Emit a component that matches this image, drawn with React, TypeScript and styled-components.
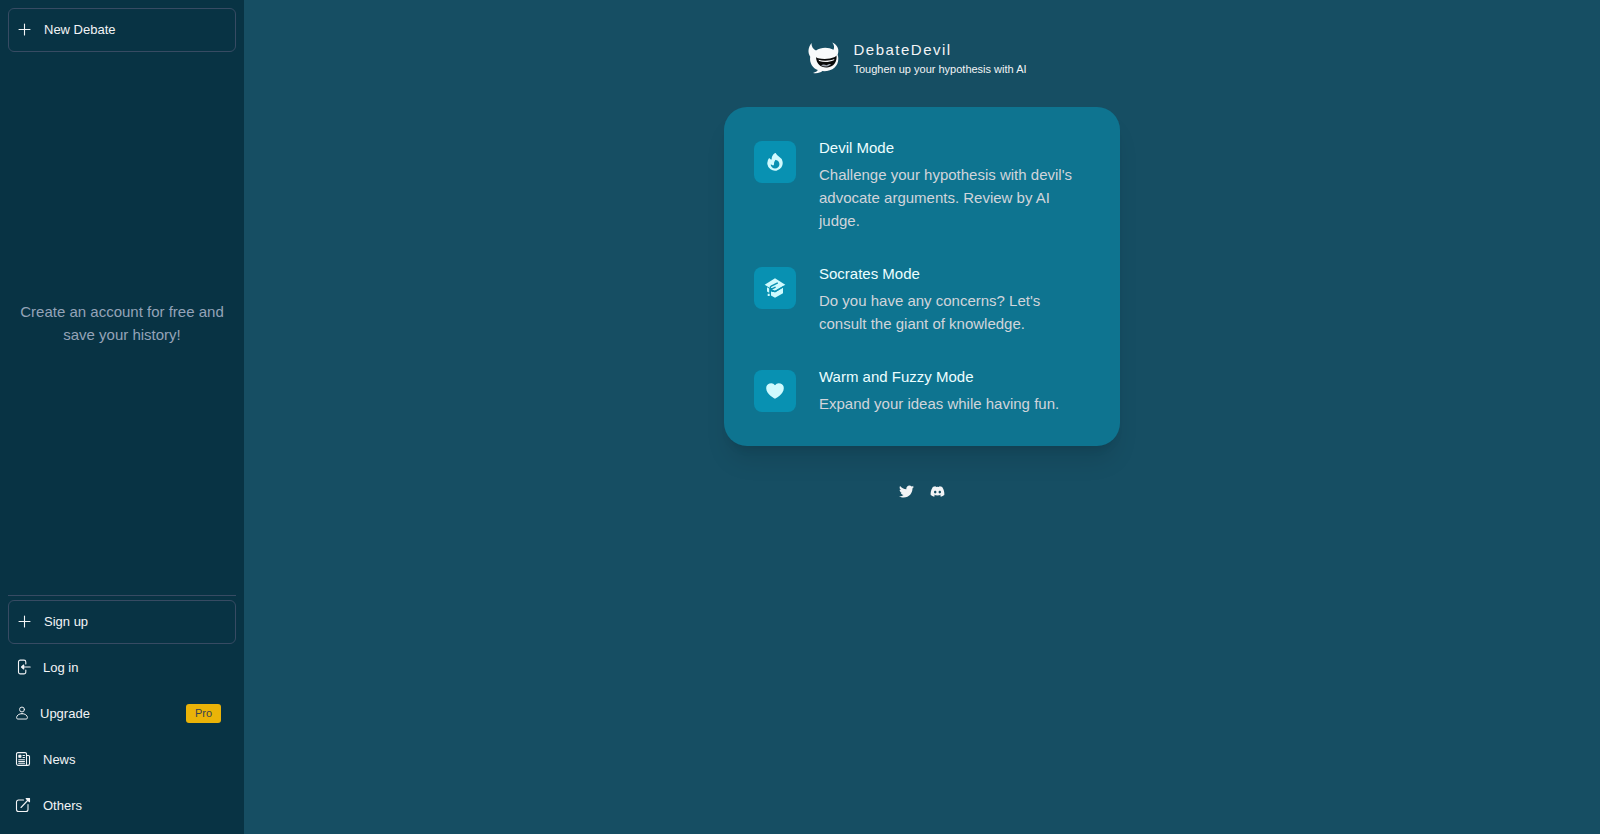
import React from "react";
import styled, { createGlobalStyle } from "styled-components";
import { HiMiniFire, HiMiniHeart } from "react-icons/hi2";
import { FaTwitter, FaDiscord } from "react-icons/fa";

const GlobalStyle = createGlobalStyle`
  *, *::before, *::after { box-sizing: border-box; }
  body {
    margin: 0;
    background: #164e63;
    color: #f3f4f6;
    font-family: "Liberation Sans", Arial, sans-serif;
    font-size: 15px;
    line-height: 23px;
  }
  h1, h2, p, ul { margin: 0; padding: 0; font-weight: 400; }
  ul { list-style: none; }
  svg { display: block; flex: none; }
`;

const Shell = styled.div`
  display: flex;
  min-height: 100vh;
`;

const Sidebar = styled.aside`
  display: flex;
  flex-direction: column;
  flex: none;
  width: 244px;
  padding: 8px 8px 6px;
  background: #083344;
`;

const OutlinedButton = styled.button`
  display: flex;
  align-items: center;
  gap: 12px;
  width: 100%;
  height: 44px;
  padding: 0 7px 2px;
  border: 1px solid #374b63;
  border-radius: 6px;
  background: transparent;
  color: inherit;
  font: inherit;
  font-size: 13px;
  text-align: left;
  cursor: pointer;
`;

const History = styled.div`
  display: flex;
  flex: 1;
  align-items: center;
  justify-content: center;
  border-bottom: 1px solid #374b63;
  margin-bottom: 4px;
  padding: 0 8px 2px;
  color: #94a3b8;
  text-align: center;
`;

const MenuLink = styled.a<{ $tight?: boolean }>`
  display: flex;
  align-items: center;
  gap: ${(p) => (p.$tight ? 11 : 12)}px;
  height: 46px;
  padding: 0 15px 0 7px;
  color: inherit;
  font-size: 13px;
  text-decoration: none;
`;

const ProBadge = styled.span`
  margin-left: auto;
  padding: 0 9px;
  border-radius: 3px;
  background: #eab308;
  color: #374151;
  font-size: 11px;
  line-height: 19px;
`;

const Main = styled.main`
  display: flex;
  flex: 1;
  flex-direction: column;
  align-items: center;
  padding: 38px 16px;
`;

const Brand = styled.header`
  display: flex;
  align-items: center;
  gap: 10px;
  padding-right: 12px;
`;

const BrandName = styled.h1`
  font-size: 15px;
  line-height: 23px;
  letter-spacing: 0.1em;
`;

const Tagline = styled.p`
  font-size: 11px;
  line-height: 16px;
`;

const Card = styled.ul`
  display: flex;
  flex-direction: column;
  gap: 30px;
  width: 100%;
  max-width: 396px;
  margin-top: 30px;
  padding: 29px 30px 31px;
  border-radius: 23px;
  background: #0e7490;
  box-shadow: 0 19px 24px -5px rgba(0, 0, 0, 0.1), 0 8px 10px -6px rgba(0, 0, 0, 0.1);
`;

const Mode = styled.li`
  display: flex;
  align-items: flex-start;
  gap: 23px;
`;

const ModeIcon = styled.span`
  display: grid;
  flex: none;
  place-items: center;
  width: 42px;
  height: 42px;
  margin-top: 5px;
  border-radius: 8px;
  background: #0891b2;
  color: #cffafe;
`;

const ModeTitle = styled.h2`
  color: #ecfeff;
  font-size: 15px;
  line-height: 23px;
`;

const ModeText = styled.p`
  margin-top: 4px;
  color: #d1d5db;
`;

const Socials = styled.div`
  display: flex;
  gap: 16px;
  margin-top: 38px;
`;

const SocialLink = styled.a`
  color: #f3f4f6;
`;

const Line = ({ size = 16, children }: { size?: number; children: React.ReactNode }) => (
  <svg width={size} height={size} viewBox="0 0 16 16" fill="none" stroke="currentColor" strokeWidth="1.1" strokeLinecap="round" strokeLinejoin="round" aria-hidden="true">
    {children}
  </svg>
);

const PlusIcon = () => (
  <Line>
    <path d="M8.500 3v11M3 8.500h11" />
  </Line>
);

const LoginIcon = () => (
  <Line>
    <path d="M10.800 5V2.900A1.800 1.800 0 0 0 9 1.100H5.300a1.800 1.800 0 0 0-1.800 1.800v10.200a1.800 1.800 0 0 0 1.800 1.800H9a1.800 1.800 0 0 0 1.800-1.800V11M15.200 8H7.500" />
    <path d="M8.700 6v4L6.500 8z" fill="currentColor" />
  </Line>
);

const UserIcon = () => (
  <Line size={14}>
    <circle cx="8" cy="4" r="2.800" />
    <path d="M8 8.700c-3.500 0-6.200 2-6.200 4.700 0 .9.500 1.500 1.400 1.500h9.600c.9 0 1.400-.6 1.400-1.500 0-2.700-2.700-4.700-6.200-4.700z" />
  </Line>
);

const NewsIcon = () => (
  <Line>
    <path d="M11.500 13V3a1.400 1.400 0 0 0-1.400-1.400H2.900A1.400 1.400 0 0 0 1.500 3v9.600a1.800 1.800 0 0 0 1.800 1.800h9.500a1.700 1.700 0 0 0 1.700-1.700V5.500a1 1 0 0 0-1-1h-2M11.500 12.900c0 .8.500 1.500 1.400 1.500" />
    <path d="M8 4.500h1.500M8 6.500h1.500M3.700 8.700h5.800M3.700 10.500h5.800M3.700 12.200h5.800" />
    <path d="M3.900 4.300h2v2h-2z" fill="currentColor" />
  </Line>
);

const ExternalIcon = () => (
  <Line>
    <path d="M8.500 3h-5a2 2 0 0 0-2 2v7.500a2 2 0 0 0 2 2H11a2 2 0 0 0 2-2v-5M13.500 2.500L6 10.500" />
    <path d="M11.200 1.500h3.300v3.300z" fill="currentColor" />
  </Line>
);

const CapIcon = () => (
  <svg width="22" height="22" viewBox="0 0 22 22" aria-hidden="true">
    <path fill="currentColor" d="M11 1.300L21.300 7.800 11 14 .7 7.800z" />
    <path fill="currentColor" d="M11 20.700L7 18.400v-4.600l4 1.800 8-5v5.700z" />
    <path fill="currentColor" d="M3 10.300l2.200 1.200v4.200L3 14.500zM3.700 16.700h2v2.300h-2z" />
    <path fill="none" stroke="#0891b2" strokeWidth="1.400" d="M13.800 5.900L7.200 9.200c-1.700 1-.8 3.200 1.200 2.400l3.200-1.500M20 9.300l-8 4.600c-2 1.100-4 .2-5.300-.6" />
  </svg>
);

const DevilLogo = () => (
  <svg width="38" height="38" viewBox="0 0 38 38" aria-hidden="true">
    <path fill="#f9fafb" d="M6.500 4C3 8.500 2.600 13.500 5.200 17.700 4.200 24 8 29.500 12.800 31.100c-.8 1.500-2 2.200-4.800 2.900 4 .8 7.200-.1 9.400-1.900C27 32.700 33.500 27.500 33.300 19.500c0-1.400-.3-2.600-.7-3.700 2-5 .2-9.800-5.300-12.300 2 2.700 2.200 5 1.200 7.300-5-3-12.500-3-17.500.7C8 10 6.300 7.300 6.500 4z" />
    <path fill="#0a0a0a" d="M11 18c.6.800 1.200 1 2 1.200 6 1.200 12 .8 16.800-1.200.8-.4 1.200-.8 1.700-1.500.8 6.500-3 11.500-9.300 12-6 .5-11-3.500-11.200-10.500z" />
    <path fill="#f3f4f6" d="M13.500 20.800c5.500 1.400 11.300 1 16-.8l-.6 1.200c-4.300 2-10.200 2.300-14.800.8z" />
    <path fill="#9ca3af" d="M16 26.300c2-1.500 4-.8 5.500-.1 1.500-1 3-1.300 4.700-1.200-2.500 2.900-7 3.300-10.200 1.300z" />
  </svg>
);

const modes = [
  { title: "Devil Mode", text: "Challenge your hypothesis with devil's advocate arguments. Review by AI judge.", icon: <HiMiniFire size={22} /> },
  { title: "Socrates Mode", text: "Do you have any concerns? Let's consult the giant of knowledge.", icon: <CapIcon /> },
  { title: "Warm and Fuzzy Mode", text: "Expand your ideas while having fun.", icon: <HiMiniHeart size={22} /> },
];

export default function App() {
  return (
    <>
      <GlobalStyle />
      <Shell>
        <Sidebar>
          <OutlinedButton type="button">
            <PlusIcon />
            New Debate
          </OutlinedButton>
          <History>
            <p>Create an account for free and save your history!</p>
          </History>
          <OutlinedButton type="button">
            <PlusIcon />
            Sign up
          </OutlinedButton>
          <nav>
            <MenuLink href="#login"><LoginIcon />Log in</MenuLink>
            <MenuLink href="#upgrade" $tight>
              <UserIcon />
              Upgrade
              <ProBadge>Pro</ProBadge>
            </MenuLink>
            <MenuLink href="#news"><NewsIcon />News</MenuLink>
            <MenuLink href="#others"><ExternalIcon />Others</MenuLink>
          </nav>
        </Sidebar>
        <Main>
          <Brand>
            <DevilLogo />
            <div>
              <BrandName>DebateDevil</BrandName>
              <Tagline>Toughen up your hypothesis with AI</Tagline>
            </div>
          </Brand>
          <Card>
            {modes.map((mode) => (
              <Mode key={mode.title}>
                <ModeIcon>{mode.icon}</ModeIcon>
                <div>
                  <ModeTitle>{mode.title}</ModeTitle>
                  <ModeText>{mode.text}</ModeText>
                </div>
              </Mode>
            ))}
          </Card>
          <Socials>
            <SocialLink href="#twitter" aria-label="Twitter"><FaTwitter size={15} /></SocialLink>
            <SocialLink href="#discord" aria-label="Discord"><FaDiscord size={15} /></SocialLink>
          </Socials>
        </Main>
      </Shell>
    </>
  );
}
